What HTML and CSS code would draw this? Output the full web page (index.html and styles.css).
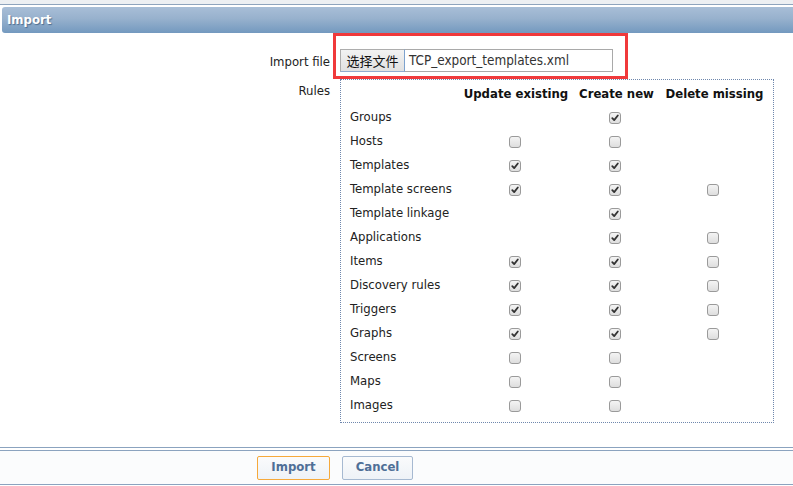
FILE: index.html
```html
<!DOCTYPE html>
<html>
<head>
<meta charset="utf-8">
<link rel="stylesheet" href="styles.css">
</head>
<body>
<div class="topstrip"></div>
<div class="hdr">Import</div>
<div class="form">
  <div class="lbl lbl-file">Import file</div>
  <div class="fld fld-file">
    <div class="file"><span class="file-btn">选择文件</span><span class="file-name">TCP_export_templates.xml</span></div>
    <div class="mark"></div>
  </div>
  <div class="lbl lbl-rules">Rules</div>
  <div class="fld">
    <div class="rules">
      <div class="rh"></div><div class="rh">Update existing</div><div class="rh">Create new</div><div class="rh">Delete missing</div>

      <div class="rl">Groups</div><div class="rc"></div><div class="rc"><span class="cb on"><svg viewBox="0 0 11 11"><path d="M2.5 5.6 L4.6 7.8 L8.6 2.8" /></svg></span></div><div class="rc"></div>
      <div class="rl">Hosts</div><div class="rc"><span class="cb"></span></div><div class="rc"><span class="cb"></span></div><div class="rc"></div>
      <div class="rl">Templates</div><div class="rc"><span class="cb on"><svg viewBox="0 0 11 11"><path d="M2.5 5.6 L4.6 7.8 L8.6 2.8" /></svg></span></div><div class="rc"><span class="cb on"><svg viewBox="0 0 11 11"><path d="M2.5 5.6 L4.6 7.8 L8.6 2.8" /></svg></span></div><div class="rc"></div>
      <div class="rl">Template screens</div><div class="rc"><span class="cb on"><svg viewBox="0 0 11 11"><path d="M2.5 5.6 L4.6 7.8 L8.6 2.8" /></svg></span></div><div class="rc"><span class="cb on"><svg viewBox="0 0 11 11"><path d="M2.5 5.6 L4.6 7.8 L8.6 2.8" /></svg></span></div><div class="rc"><span class="cb"></span></div>
      <div class="rl">Template linkage</div><div class="rc"></div><div class="rc"><span class="cb on"><svg viewBox="0 0 11 11"><path d="M2.5 5.6 L4.6 7.8 L8.6 2.8" /></svg></span></div><div class="rc"></div>
      <div class="rl">Applications</div><div class="rc"></div><div class="rc"><span class="cb on"><svg viewBox="0 0 11 11"><path d="M2.5 5.6 L4.6 7.8 L8.6 2.8" /></svg></span></div><div class="rc"><span class="cb"></span></div>
      <div class="rl">Items</div><div class="rc"><span class="cb on"><svg viewBox="0 0 11 11"><path d="M2.5 5.6 L4.6 7.8 L8.6 2.8" /></svg></span></div><div class="rc"><span class="cb on"><svg viewBox="0 0 11 11"><path d="M2.5 5.6 L4.6 7.8 L8.6 2.8" /></svg></span></div><div class="rc"><span class="cb"></span></div>
      <div class="rl">Discovery rules</div><div class="rc"><span class="cb on"><svg viewBox="0 0 11 11"><path d="M2.5 5.6 L4.6 7.8 L8.6 2.8" /></svg></span></div><div class="rc"><span class="cb on"><svg viewBox="0 0 11 11"><path d="M2.5 5.6 L4.6 7.8 L8.6 2.8" /></svg></span></div><div class="rc"><span class="cb"></span></div>
      <div class="rl">Triggers</div><div class="rc"><span class="cb on"><svg viewBox="0 0 11 11"><path d="M2.5 5.6 L4.6 7.8 L8.6 2.8" /></svg></span></div><div class="rc"><span class="cb on"><svg viewBox="0 0 11 11"><path d="M2.5 5.6 L4.6 7.8 L8.6 2.8" /></svg></span></div><div class="rc"><span class="cb"></span></div>
      <div class="rl">Graphs</div><div class="rc"><span class="cb on"><svg viewBox="0 0 11 11"><path d="M2.5 5.6 L4.6 7.8 L8.6 2.8" /></svg></span></div><div class="rc"><span class="cb on"><svg viewBox="0 0 11 11"><path d="M2.5 5.6 L4.6 7.8 L8.6 2.8" /></svg></span></div><div class="rc"><span class="cb"></span></div>
      <div class="rl">Screens</div><div class="rc"><span class="cb"></span></div><div class="rc"><span class="cb"></span></div><div class="rc"></div>
      <div class="rl">Maps</div><div class="rc"><span class="cb"></span></div><div class="rc"><span class="cb"></span></div><div class="rc"></div>
      <div class="rl">Images</div><div class="rc"><span class="cb"></span></div><div class="rc"><span class="cb"></span></div><div class="rc"></div>
    </div>
  </div>
</div>
<div class="sep"></div>
<div class="footer">
  <button class="btn btn-primary">Import</button>
  <button class="btn">Cancel</button>
</div>
</body>
</html>
```

FILE: styles.css
```css
html, body {
  margin: 0;
  padding: 0;
  background: #ffffff;
}
body {
  font-family: "DejaVu Sans Condensed", "DejaVu Sans", sans-serif;
  font-size: 13px;
  color: #222222;
  width: 793px;
  height: 486px;
  overflow: hidden;
}
.topstrip {
  height: 4px;
  background: #eceff2;
  border-bottom: 1px solid #8ea4bd;
  margin-bottom: 2px;
}
.hdr {
  margin-left: 2px;
  height: 26px;
  line-height: 26px;
  padding-left: 5px;
  background: linear-gradient(to bottom, #a8bed7 0%, #97b1cd 45%, #7399bf 100%);
  border-radius: 3px 0 0 3px;
  color: #ffffff;
  font-weight: bold;
  font-size: 13px;
  text-shadow: 1px 1px 1px #4d6d90;
}
.form {
  display: grid;
  grid-template-columns: 330px 434px;
  column-gap: 10px;
}
.lbl {
  text-align: right;
}
.lbl-file {
  padding-top: 17px;
  height: 23px;
  line-height: 23px;
}
.fld-file {
  position: relative;
  padding-top: 16px;
}
.file {
  display: flex;
  width: 273px;
  height: 23px;
  box-sizing: border-box;
  border: 1px solid #a9a9a9;
}
.file-btn {
  box-sizing: border-box;
  width: 65px;
  margin: -1px 0 -1px -1px;
  height: 23px;
  line-height: 21px;
  text-align: center;
  border: 1px solid #adadad;
  border-right-color: #7da2ce;
  border-bottom-color: #90acd0;
  background: linear-gradient(to bottom, #f2f2f2, #e1e1e1);
  font-family: "Noto Sans CJK SC", sans-serif;
  font-size: 13px;
  color: #111;
}
.file-name {
  padding-left: 4px;
  line-height: 22px;
  font-size: 13.4px;
  color: #333;
}
.mark {
  position: absolute;
  left: -7px;
  top: 0;
  width: 289px;
  height: 40px;
  border: 3px solid #f0393b;
}
.lbl-rules {
  margin-top: 6px;
  padding-top: 4px;
}
.rules {
  margin-top: 6px;
  box-sizing: border-box;
  width: 434px;
  border: 1px dotted #6f87ad;
  padding: 1px 4px 4px 9px;
  display: grid;
  grid-template-columns: 109px 114px 87px 109px;
  grid-auto-rows: 24px;
  grid-template-rows: 25px;
}
.rh {
  font-weight: bold;
  font-size: 13px;
  text-align: center;
  line-height: 25px;
  color: #111;
}
.rl {
  line-height: 22px;
  padding-bottom: 2px;
  white-space: nowrap;
}
.rc {
  display: flex;
  align-items: center;
  justify-content: center;
  padding-right: 3px;
}
.cb {
  box-sizing: border-box;
  width: 12px;
  height: 12px;
  border: 1px solid #9a9a9a;
  border-radius: 3px;
  background: linear-gradient(to bottom, #f4f4f4, #dedede);
  display: flex;
}
.cb svg {
  width: 10px;
  height: 10px;
}
.cb path {
  fill: none;
  stroke: #333;
  stroke-width: 2;
  stroke-linecap: round;
  stroke-linejoin: round;
}
.sep {
  margin-top: 24px;
  height: 2px;
  border-top: 1px solid #8ba3bf;
  border-bottom: 1px solid #8ba3bf;
}
.footer {
  height: 34px;
  box-sizing: border-box;
  padding: 5px 0 0 257px;
  background: #fbfcfd;
  border-bottom: 1px solid #8ba3bf;
  display: flex;
  gap: 12px;
  align-items: flex-start;
}
.btn {
  height: 24px;
  box-sizing: border-box;
  padding: 0 0 3px 0;
  border: 1px solid #a6b9d1;
  border-radius: 2px;
  background: linear-gradient(to bottom, #fafbfc, #eef2f7);
  font-family: "DejaVu Sans Condensed", "DejaVu Sans", sans-serif;
  font-weight: bold;
  font-size: 13px;
  color: #4f6f97;
  width: 71px;
}
.btn-primary {
  width: 73px;
  border-color: #f6a93b;
}
```
